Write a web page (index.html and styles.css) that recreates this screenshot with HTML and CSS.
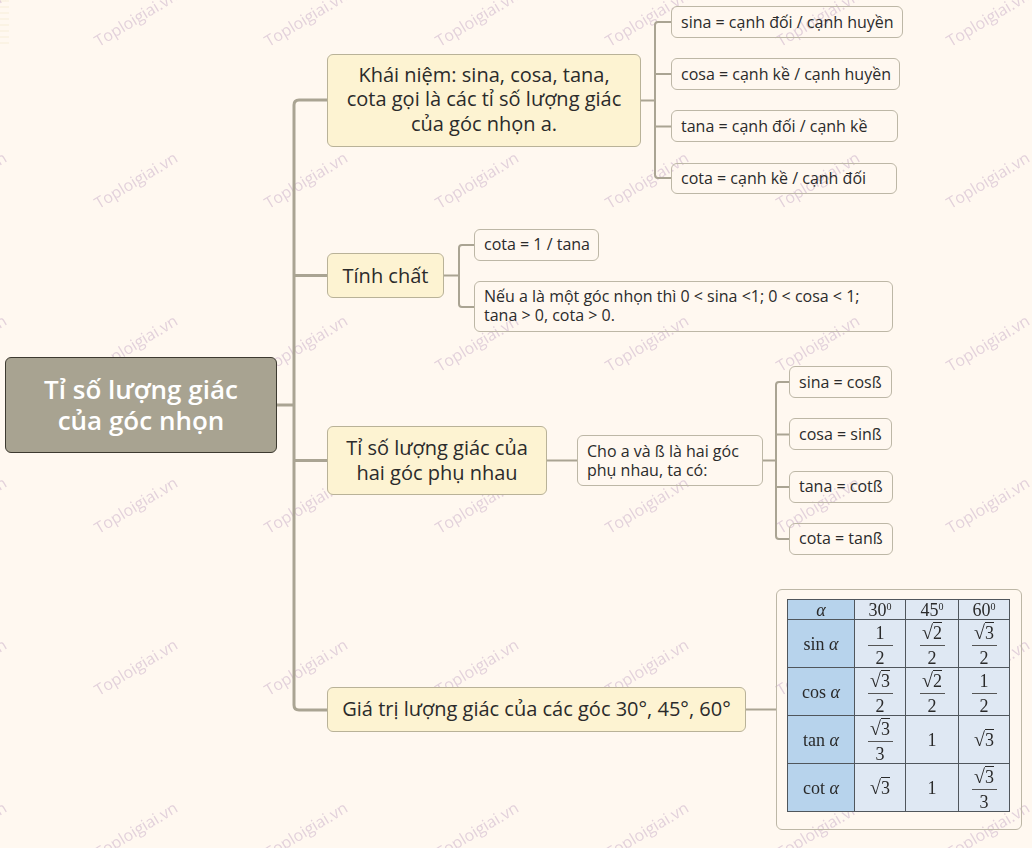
FILE: index.html
```html
<!DOCTYPE html>
<html lang="vi">
<head>
<meta charset="utf-8">
<title>Tỉ số lượng giác của góc nhọn</title>
<link rel="stylesheet" href="styles.css">
</head>
<body>
<main class="map">
  <div class="stripes" aria-hidden="true"></div>

  <div class="marks" aria-hidden="true">
    <span>Toploigiai.vn</span><span>Toploigiai.vn</span><span>Toploigiai.vn</span><span>Toploigiai.vn</span><span>Toploigiai.vn</span><span>Toploigiai.vn</span><span>Toploigiai.vn</span>
    <span>Toploigiai.vn</span><span>Toploigiai.vn</span><span>Toploigiai.vn</span><span>Toploigiai.vn</span><span>Toploigiai.vn</span><span>Toploigiai.vn</span><span>Toploigiai.vn</span>
    <span>Toploigiai.vn</span><span>Toploigiai.vn</span><span>Toploigiai.vn</span><span>Toploigiai.vn</span><span>Toploigiai.vn</span><span>Toploigiai.vn</span><span>Toploigiai.vn</span>
    <span>Toploigiai.vn</span><span>Toploigiai.vn</span><span>Toploigiai.vn</span><span>Toploigiai.vn</span><span>Toploigiai.vn</span><span>Toploigiai.vn</span><span>Toploigiai.vn</span>
    <span>Toploigiai.vn</span><span>Toploigiai.vn</span><span>Toploigiai.vn</span><span>Toploigiai.vn</span><span>Toploigiai.vn</span><span>Toploigiai.vn</span><span>Toploigiai.vn</span>
    <span>Toploigiai.vn</span><span>Toploigiai.vn</span><span>Toploigiai.vn</span><span>Toploigiai.vn</span><span>Toploigiai.vn</span><span>Toploigiai.vn</span><span>Toploigiai.vn</span>
  </div>

  <svg class="links" width="1032" height="848" viewBox="0 0 1032 848" aria-hidden="true">
    <g class="trunk">
      <path d="M277 405H294"/>
      <path d="M327 100H299Q294 100 294 105V705Q294 710 299 710H327"/>
      <path d="M294 275.500H327"/>
      <path d="M294 460.500H327"/>
    </g>
    <g class="twig">
      <path d="M641 100.500H655"/>
      <path d="M671 22H658Q655 22 655 25V175Q655 178 658 178H671"/>
      <path d="M655 74H671"/>
      <path d="M655 126.500H671"/>
      <path d="M444 275.500H459"/>
      <path d="M474 245H462Q459 245 459 248V304Q459 307 462 307H474"/>
      <path d="M547 460.500H577"/>
      <path d="M763 460.500H776"/>
      <path d="M789 382H779Q776 382 776 385V536Q776 539 779 539H789"/>
      <path d="M776 434.500H789"/>
      <path d="M776 487H789"/>
      <path d="M746 709.500H776"/>
    </g>
  </svg>

  <div class="node root n-root">Tỉ số lượng giác<br>của góc nhọn</div>

  <div class="node main n-a lift">Khái niệm: sina, cosa, tana,<br>cota gọi là các tỉ số lượng giác<br>của góc nhọn a.</div>
  <div class="node main n-b drop">Tính chất</div>
  <div class="node main n-c">Tỉ số lượng giác của<br>hai góc phụ nhau</div>
  <div class="node main n-d">Giá trị lượng giác của các góc 30°, 45°, 60°</div>

  <div class="node leaf n-a1">sina = cạnh đối / cạnh huyền</div>
  <div class="node leaf n-a2">cosa = cạnh kề / cạnh huyền</div>
  <div class="node leaf n-a3">tana = cạnh đối / cạnh kề</div>
  <div class="node leaf n-a4">cota = cạnh kề / cạnh đối</div>

  <div class="node leaf n-b1 lift">cota = 1 / tana</div>
  <div class="node leaf n-b2 lift">Nếu a là một góc nhọn thì 0 &lt; sina &lt;1; 0 &lt; cosa &lt; 1;<br>tana &gt; 0, cota &gt; 0.</div>

  <div class="node leaf n-c0">Cho a và ß là hai góc<br>phụ nhau, ta có:</div>
  <div class="node leaf n-c1">sina = cosß</div>
  <div class="node leaf n-c2">cosa = sinß</div>
  <div class="node leaf n-c3 lift">tana = cotß</div>
  <div class="node leaf n-c4 lift">cota = tanß</div>

  <div class="node leaf n-table">
    <table class="trig">
      <colgroup><col class="c0"><col class="c1"><col class="c2"><col class="c3"></colgroup>
      <tr class="r0"><th><i>α</i></th><td>30<sup>0</sup></td><td>45<sup>0</sup></td><td>60<sup>0</sup></td></tr>
      <tr class="r1"><th>sin<i> α</i></th>
        <td><span class="frac"><span>1</span><span class="den">2</span></span></td>
        <td><span class="frac"><span><span class="root-sign">√</span><span class="rad">2</span></span><span class="den">2</span></span></td>
        <td><span class="frac"><span><span class="root-sign">√</span><span class="rad">3</span></span><span class="den">2</span></span></td></tr>
      <tr class="r2"><th>cos<i> α</i></th>
        <td><span class="frac"><span><span class="root-sign">√</span><span class="rad">3</span></span><span class="den">2</span></span></td>
        <td><span class="frac"><span><span class="root-sign">√</span><span class="rad">2</span></span><span class="den">2</span></span></td>
        <td><span class="frac"><span>1</span><span class="den">2</span></span></td></tr>
      <tr class="r3"><th>tan<i> α</i></th>
        <td><span class="frac"><span><span class="root-sign">√</span><span class="rad">3</span></span><span class="den">3</span></span></td>
        <td>1</td>
        <td><span class="root-sign">√</span><span class="rad">3</span></td></tr>
      <tr class="r4"><th>cot<i> α</i></th>
        <td><span class="root-sign">√</span><span class="rad">3</span></td>
        <td>1</td>
        <td><span class="frac"><span><span class="root-sign">√</span><span class="rad">3</span></span><span class="den">3</span></span></td></tr>
    </table>
  </div>
</main>
</body>
</html>
```
FILE: styles.css
```css
html, body {
  margin: 0;
  padding: 0;
  height: 848px;
  overflow: hidden;
  background: #fff8f0;
}

.map {
  position: relative;
  width: 1032px;
  height: 848px;
  overflow: hidden;
  font-family: "Open Sans", "Noto Sans", sans-serif;
  color: #2b2b2b;
}

.stripes {
  position: absolute;
  left: 0;
  top: 0;
  width: 9px;
  height: 44px;
  background: repeating-linear-gradient(#fbf3e4 0 2px, #fff8f0 2px 6px);
}

.links {
  position: absolute;
  left: 0;
  top: 0;
}
.links path { fill: none; stroke: #aaa493; }
.trunk path { stroke-width: 3; }
.twig path { stroke-width: 2; }

.node {
  position: absolute;
  box-sizing: border-box;
  display: flex;
  align-items: center;
}

.root {
  left: 5px;
  top: 357px;
  width: 272px;
  height: 96px;
  justify-content: center;
  text-align: center;
  background: #a8a391;
  border: 1px solid #3d3a30;
  border-radius: 6px;
  color: #fff;
  font-size: 26px;
  line-height: 31px;
  font-weight: 600;
}

.main {
  justify-content: center;
  text-align: center;
  background: #fdf3d2;
  border: 1px solid #b9b298;
  border-radius: 6px;
  font-size: 20px;
  line-height: 24.500px;
}

.leaf {
  padding-left: 9px;
  border: 1px solid #bdb7a6;
  border-radius: 6px;
  font-size: 16px;
  line-height: 19px;
  white-space: nowrap;
}

.lift { padding-bottom: 2px; }
.drop { padding-top: 2px; }

.n-a { left: 327px; top: 54px; width: 314px; height: 93px; }
.n-b { left: 327px; top: 253px; width: 117px; height: 45px; }
.n-c { left: 327px; top: 426px; width: 220px; height: 69px; }
.n-d { left: 327px; top: 687px; width: 419px; height: 45px; }

.n-a1 { left: 671px; top: 6px; width: 232px; height: 32px; }
.n-a2 { left: 671px; top: 58px; width: 229px; height: 32px; }
.n-a3 { left: 671px; top: 110px; width: 227px; height: 32px; }
.n-a4 { left: 671px; top: 163px; width: 226px; height: 31px; }
.n-b1 { left: 474px; top: 229px; width: 125px; height: 32px; }
.n-b2 { left: 474px; top: 281px; width: 419px; height: 51px; }
.n-c0 { left: 577px; top: 435px; width: 186px; height: 51px; }
.n-c1 { left: 789px; top: 366px; width: 103px; height: 32px; }
.n-c2 { left: 789px; top: 418px; width: 103px; height: 32px; }
.n-c3 { left: 789px; top: 471px; width: 104px; height: 32px; }
.n-c4 { left: 789px; top: 523px; width: 104px; height: 32px; }

.n-table {
  left: 776px;
  top: 589px;
  width: 246px;
  height: 241px;
  padding: 9px 0 0 10px;
  align-items: flex-start;
}

.trig {
  width: 222px;
  height: 213px;
  table-layout: fixed;
  border-collapse: collapse;
  background: #dfe8f3;
  font-family: "Liberation Serif", "Times New Roman", serif;
  font-size: 18px;
  line-height: 18px;
  color: #2a2a2a;
  text-align: center;
  filter: blur(0.35px);
}
.trig th, .trig td {
  padding: 0;
  border: 1px solid #50565c;
  font-weight: 400;
  text-align: center;
  vertical-align: middle;
}
.trig th { background: #b7d3ec; }
.trig i { font-size: 18px; }
.trig sup { font-size: 10px; line-height: 0; vertical-align: 6px; }

.c0 { width: 67px; }
.c1 { width: 51px; }
.c2 { width: 53px; }
.c3 { width: 51px; }
.r0 { height: 20px; }
.r1, .r2, .r3, .r4 { height: 48px; }

.frac {
  display: flex;
  flex-direction: column;
  align-items: center;
  width: 25px;
  height: 46px;
  margin: 0 auto;
}
.frac > span { display: block; height: 24px; line-height: 24px; white-space: nowrap; }
.frac .den {
  height: 22px;
  line-height: 24px;
  border-top: 1px solid #555;
  align-self: stretch;
}
.root-sign { font-size: 20px; line-height: 18px; }
.rad { border-top: 1px solid #2a2a2a; }

.marks {
  position: absolute;
  left: -120px;
  top: -63px;
  display: grid;
  grid-template-columns: repeat(7, 170.500px);
  grid-auto-rows: 162.300px;
  justify-items: center;
  align-items: center;
  pointer-events: none;
}
.marks span {
  transform: rotate(-31deg);
  font-size: 16px;
  color: #dcc8d6;
  opacity: 0.8;
  white-space: nowrap;
}
```
